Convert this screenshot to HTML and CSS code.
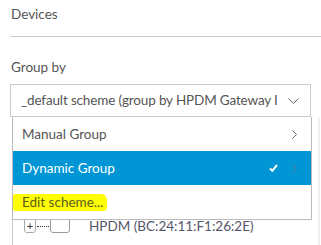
FILE: index.html
```html
<!DOCTYPE html>
<html lang="en">
<head>
    <meta charset="UTF-8">
    <meta name="viewport" content="width=device-width, initial-scale=1.0">
    <title>Devices</title>
    <link rel="stylesheet" href="styles.css">
</head>
<body>
    <div class="panel">
        <h2 class="panel-title">Devices</h2>

        <div class="field-label">Group by</div>

        <div class="select-wrap">
            <div class="select-box">
                <span class="select-text">_default scheme (group by HPDM Gateway ID)</span>
                <svg class="select-caret" width="11" height="6" viewBox="0 0 11 6">
                    <path d="M0.5 0.5 L5.5 5.5 L10.5 0.5" fill="none" stroke="#666" stroke-width="1"/>
                </svg>
            </div>

            <!-- Dropdown menu -->
            <ul class="menu">
                <li class="menu-item">
                    <span>Manual Group</span>
                    <svg class="chevron" width="5" height="9" viewBox="0 0 5 9">
                        <path d="M0.5 0.5 L4.5 4.5 L0.5 8.5" fill="none" stroke="#666" stroke-width="1"/>
                    </svg>
                </li>
                <li class="menu-item active">
                    <span>Dynamic Group</span>
                    <svg class="check" width="9" height="8" viewBox="0 0 9 8">
                        <path d="M1 4.5 L3.3 6.8 L8 1" fill="none" stroke="#fff" stroke-width="2"/>
                    </svg>
                    <svg class="chevron" width="5" height="9" viewBox="0 0 5 9">
                        <path d="M0.5 0.5 L4.5 4.5 L0.5 8.5" fill="none" stroke="#5b7d95" stroke-width="1"/>
                    </svg>
                </li>
                <li class="menu-item edit">
                    <span class="marker">Edit scheme...</span>
                </li>
            </ul>
        </div>

        <div class="tree">
            <div class="tree-row">
                <span class="expander">+</span>
                <span class="dots"></span>
                <span class="checkbox"></span>
                <span class="node-label">HPDM (BC:24:11:F1:26:2E)</span>
            </div>
        </div>
    </div>
</body>
</html>
```

FILE: styles.css
```css
* {
    margin: 0;
    padding: 0;
    box-sizing: border-box;
}

body {
    width: 321px;
    height: 245px;
    overflow: hidden;
    background: #ffffff;
    font-family: 'Lato', 'Liberation Sans', sans-serif;
    font-size: 13.5px;
    color: #555555;
}

.panel {
    padding-left: 10px;
}

.panel-title {
    font-size: 13.5px;
    font-weight: 400;
    height: 37px;
    padding: 6px 0 0 1px;
    border-bottom: 1px solid #cccccc;
}

.field-label {
    padding: 22px 0 0 1px;
    height: 47px;
}

.select-wrap {
    position: relative;
    width: 301px;
}

.select-box {
    display: flex;
    align-items: center;
    height: 33px;
    padding: 0 11px 0 10px;
    border: 1px solid #cccccc;
    background: #fff;
}

.select-text {
    flex: 1;
    overflow: hidden;
    white-space: nowrap;
    margin-right: 10px;
    padding-bottom: 1px;
    letter-spacing: -0.15px;
}

.select-caret {
    flex-shrink: 0;
}

.menu {
    position: absolute;
    top: 33px;
    left: 2px;
    width: 300px;
    list-style: none;
    background: #fff;
    border: 1px solid #bbbbbb;
    border-top: none;
    z-index: 10;
}

.menu-item {
    display: flex;
    align-items: center;
    height: 34px;
    padding: 0 14px 0 9px;
}

.menu-item span {
    flex: 1;
}

.menu-item.active {
    background: #0096d6;
    color: #ffffff;
}

.menu-item .check {
    margin-right: 14px;
}

.marker {
    flex: none !important;
    margin-left: -9px;
    padding: 0 4px 1px 9px;
    background: #ffff00;
    color: #5c5c1c;
    border-radius: 2px 6px 4px 2px;
}

.tree {
    margin: 0 1px 0 2px;
    height: 140px;
    border-left: 1px solid #cccccc;
    border-right: 2px solid #f0f0f0;
    padding: 102px 0 0 11px;
}

.tree-row {
    display: flex;
    align-items: center;
    height: 14px;
}

.expander {
    width: 12px;
    height: 14px;
    border: 1px solid #aaaaaa;
    border-radius: 0 0 3px 3px;
    font-size: 11px;
    line-height: 11px;
    text-align: center;
    color: #333;
}

.dots {
    width: 12px;
    border-top: 1px dotted #333;
    margin: 0 1px;
}

.checkbox {
    width: 20px;
    height: 14px;
    border: 1px solid #999999;
    border-radius: 0 0 3px 3px;
}

.node-label {
    margin-left: 19px;
    color: #55566a;
    line-height: 14px;
}
```
